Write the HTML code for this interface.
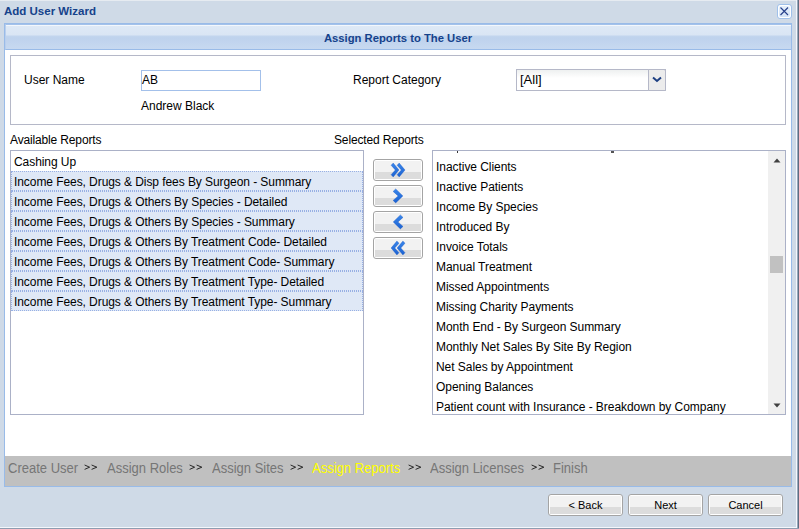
<!DOCTYPE html>
<html><head><meta charset="utf-8">
<style>
*{box-sizing:border-box;margin:0;padding:0}
html,body{width:799px;height:529px;overflow:hidden;background:#cfdae7;font-family:"Liberation Sans",sans-serif}
.abs{position:absolute}
#topline{left:0;top:0;width:799px;height:1px;background:#e6ebf1}
#rline1{left:796px;top:0;width:1px;height:528px;background:#f4f7fb}
#rline2{left:797px;top:0;width:1px;height:529px;background:#98a8bd}
#rline3{left:798px;top:0;width:1px;height:529px;background:#5f6d80}
#bline1{left:0;top:527px;width:797px;height:1px;background:#f4f7fb}
#bline2{left:0;top:528px;width:799px;height:1px;background:#8e9cb0}
#title{left:4px;top:4px;font-size:11.5px;font-weight:bold;color:#15428b;line-height:14px}
#close{left:777px;top:4px;width:15px;height:15px;border:1px solid #9fc0ea;border-radius:3px;background:#fff;padding:1px}
#close div{width:100%;height:100%;border-radius:2px;background:linear-gradient(#e5effb,#d3e3f7)}
#panel{left:4px;top:23px;width:788px;height:464px;border:1px solid #99bbe8;background:#fff}
#hdr{left:0;top:0;width:786px;height:26px;background:linear-gradient(#f3f7fc 0,#f3f7fc 1px,#dee9f6 1px,#d9e5f4 10px,#c2d5ee 11px,#bed2ed 13px,#c7d9f0 100%);border-bottom:1px solid #99bbe8;border-top:1px solid #a3c1ea;border-left:1px solid #b9cfee}
#hdr span{position:absolute;left:-1px;width:786px;text-align:center;top:7px;font-size:11.25px;font-weight:bold;color:#15428b;line-height:13px}
.lbl{font-size:12px;color:#000;line-height:14px}
.t{letter-spacing:-0.15px}
#info{left:10px;top:55px;width:776px;height:70px;border:1px solid #b5b8c8}
.inp{border:1px solid #a3c0ea;background:#fff;font-size:12px}
.list{border:1px solid #abb1c7;background:#fff;overflow:hidden}
.row{position:absolute;left:0;height:20px;width:352px;font-size:12px;letter-spacing:-0.07px;padding-left:3px;line-height:20px;white-space:nowrap;color:#000}
.sel{background:#dfe8f6;border:1px dotted #98b0e4;line-height:18px;padding-left:2px;padding-top:1px}
.rrow{position:absolute;left:3px;height:20px;font-size:12px;letter-spacing:-0.05px;line-height:20px;white-space:nowrap;color:#000}
.btn{border:1px solid #a4a4a4;border-radius:3px;background:#fff;padding:1px}
.btn .in{width:100%;height:100%;background:linear-gradient(#f2f2f2 0,#f2f2f2 61%,#dcdcdc 61%,#dcdcdc 100%)}
.step{font-size:13px;color:#767676;top:460px;line-height:15px;transform:scaleY(1.1);transform-origin:0 0}
.arr{top:464px}
#steps{left:5px;top:456px;width:786px;height:30px;background:#c0c0c0}
.bb{font-size:11px;color:#000;text-align:center;line-height:18px}
.bb .in{background:linear-gradient(#f2f2f2 0,#f2f2f2 61%,#dcdcdc 61%,#dcdcdc 100%)}
</style></head><body>
<div class="abs" id="topline"></div>
<div class="abs" id="title">Add User Wizard</div>
<div class="abs" id="close"><div></div>
<svg class="abs" style="left:2px;top:2px" width="10" height="10" viewBox="0 0 10 10"><path d="M0.5,0.5 L8,8 M8,0.5 L0.5,8" stroke="#27408b" stroke-width="1.15"/></svg></div>
<div class="abs" id="panel">
  <div class="abs" id="hdr"><span>Assign Reports to The User</span></div>
</div>
<div class="abs" id="info"></div>
<div class="abs lbl" style="left:24px;top:73px">User Name</div>
<div class="abs inp" style="left:141px;top:70px;width:120px;height:21px;line-height:19px;padding-left:0">AB</div>
<div class="abs lbl" style="left:141px;top:99px">Andrew Black</div>
<div class="abs lbl" style="left:353px;top:73px">Report Category</div>
<div class="abs" style="left:516px;top:69px;width:150px;height:22px;border:1px solid #b5b8c8;background:linear-gradient(#eef0f0,#fff 8px)"></div>
<div class="abs" style="left:520px;top:72px;font-size:13px;line-height:16px;color:#000">[All]</div>
<div class="abs" style="left:648px;top:69px;width:18px;height:22px;border:1px solid #b5b8c8;border-top-right-radius:2px;background:#ececec"></div>
<svg class="abs" style="left:652px;top:76px" width="10" height="7" viewBox="0 0 10 7"><path d="M1,1.6 L5,5 L9,1.6" fill="none" stroke="#1d3f82" stroke-width="2"/></svg>
<div class="abs lbl t" style="left:10px;top:133px">Available Reports</div>
<div class="abs lbl t" style="left:334px;top:133px">Selected Reports</div>

<div class="abs list" style="left:10px;top:150px;width:354px;height:265px">
  <div class="row" style="top:1px">Cashing Up</div>
  <div class="row sel" style="top:20px">Income Fees, Drugs &amp; Disp fees By Surgeon - Summary</div>
  <div class="row sel" style="top:40px">Income Fees, Drugs &amp; Others By Species - Detailed</div>
  <div class="row sel" style="top:60px">Income Fees, Drugs &amp; Others By Species - Summary</div>
  <div class="row sel" style="top:80px">Income Fees, Drugs &amp; Others By Treatment Code- Detailed</div>
  <div class="row sel" style="top:100px">Income Fees, Drugs &amp; Others By Treatment Code- Summary</div>
  <div class="row sel" style="top:120px">Income Fees, Drugs &amp; Others By Treatment Type- Detailed</div>
  <div class="row sel" style="top:140px">Income Fees, Drugs &amp; Others By Treatment Type- Summary</div>
</div>

<div class="abs btn" style="left:373px;top:159px;width:50px;height:22px"><div class="in"></div></div>
<div class="abs btn" style="left:373px;top:185px;width:50px;height:22px"><div class="in"></div></div>
<div class="abs btn" style="left:373px;top:211px;width:50px;height:22px"><div class="in"></div></div>
<div class="abs btn" style="left:373px;top:237px;width:50px;height:22px"><div class="in"></div></div>
<svg class="abs" style="left:373px;top:159px" width="50" height="100" viewBox="0 0 50 100">
  <defs><linearGradient id="g" x1="0" y1="0" x2="0" y2="1"><stop offset="0" stop-color="#3a86ea"/><stop offset="1" stop-color="#1b62d2"/></linearGradient></defs>
  <g fill="url(#g)" stroke="#1552bd" stroke-width="0.35">
    <path d="M18.1,6.2 L20.2,4.1 L26.0,11.0 L20.2,17.9 L18.1,15.7 L22.3,11.0 Z"/>
    <path d="M24.1,6.2 L26.2,4.1 L32.0,11.0 L26.2,17.9 L24.1,15.7 L28.3,11.0 Z"/>
    <path d="M20.1,32.4 L22.7,29.9 L29.9,36.9 L22.7,43.9 L20.1,41.4 L25.1,36.9 Z"/>
    <path d="M30.0,58.4 L27.4,55.9 L20.2,62.9 L27.4,69.9 L30.0,67.4 L25.0,62.9 Z"/>
    <path d="M26.0,84.2 L23.9,82.1 L18.1,89.0 L23.9,95.9 L26.0,93.7 L21.8,89.0 Z"/>
    <path d="M32.0,84.2 L29.9,82.1 L24.1,89.0 L29.9,95.9 L32.0,93.7 L27.8,89.0 Z"/>
  </g>
</svg>

<div class="abs list" style="left:432px;top:150px;width:354px;height:265px">
  <div class="rrow" style="top:6px">Inactive Clients</div>
  <div class="rrow" style="top:26px">Inactive Patients</div>
  <div class="rrow" style="top:46px">Income By Species</div>
  <div class="rrow" style="top:66px">Introduced By</div>
  <div class="rrow" style="top:86px">Invoice Totals</div>
  <div class="rrow" style="top:106px">Manual Treatment</div>
  <div class="rrow" style="top:126px">Missed Appointments</div>
  <div class="rrow" style="top:146px">Missing Charity Payments</div>
  <div class="rrow" style="top:166px">Month End - By Surgeon Summary</div>
  <div class="rrow" style="top:186px">Monthly Net Sales By Site By Region</div>
  <div class="rrow" style="top:206px">Net Sales by Appointment</div>
  <div class="rrow" style="top:226px">Opening Balances</div>
  <div class="rrow" style="top:246px">Patient count with Insurance - Breakdown by Company</div>
  <div class="abs" style="left:24px;top:0;width:1px;height:2px;background:#333"></div>
  <div class="abs" style="left:178px;top:0;width:3px;height:2px;background:#555"></div>
  <div class="abs" style="left:335px;top:0;width:17px;height:263px;background:#f0f0f0"></div>
  <svg class="abs" style="left:340px;top:7px" width="8" height="5" viewBox="0 0 8 5"><path d="M0.5,4.5 L4,0.5 L7.5,4.5 Z" fill="#404040"/></svg>
  <div class="abs" style="left:337px;top:105px;width:13px;height:17px;background:#c1c1c1"></div>
  <svg class="abs" style="left:340px;top:252px" width="8" height="5" viewBox="0 0 8 5"><path d="M0.5,0.5 L4,4.5 L7.5,0.5 Z" fill="#404040"/></svg>
</div>

<div class="abs" id="steps"></div>
<div class="abs step" style="left:8px">Create User</div>
<svg class="abs arr" style="left:84px" width="14" height="7" viewBox="0 0 14 7"><path d="M0.6,1 L5.6,3.2 L0.6,5.4 M7.6,1 L12.8,3.2 L7.6,5.4" fill="none" stroke="#000" stroke-width="0.8"/></svg>
<div class="abs step" style="left:107px">Assign Roles</div>
<svg class="abs arr" style="left:189px" width="14" height="7" viewBox="0 0 14 7"><path d="M0.6,1 L5.6,3.2 L0.6,5.4 M7.6,1 L12.8,3.2 L7.6,5.4" fill="none" stroke="#000" stroke-width="0.8"/></svg>
<div class="abs step" style="left:212px">Assign Sites</div>
<svg class="abs arr" style="left:290px" width="14" height="7" viewBox="0 0 14 7"><path d="M0.6,1 L5.6,3.2 L0.6,5.4 M7.6,1 L12.8,3.2 L7.6,5.4" fill="none" stroke="#000" stroke-width="0.8"/></svg>
<div class="abs step" style="left:312px;color:#ffff00">Assign Reports</div>
<svg class="abs arr" style="left:408px" width="14" height="7" viewBox="0 0 14 7"><path d="M0.6,1 L5.6,3.2 L0.6,5.4 M7.6,1 L12.8,3.2 L7.6,5.4" fill="none" stroke="#000" stroke-width="0.8"/></svg>
<div class="abs step" style="left:430px">Assign Licenses</div>
<svg class="abs arr" style="left:531px" width="14" height="7" viewBox="0 0 14 7"><path d="M0.6,1 L5.6,3.2 L0.6,5.4 M7.6,1 L12.8,3.2 L7.6,5.4" fill="none" stroke="#000" stroke-width="0.8"/></svg>
<div class="abs step" style="left:553px">Finish</div>

<div class="abs btn bb" style="left:548px;top:494px;width:75px;height:22px"><div class="in">&lt; Back</div></div>
<div class="abs btn bb" style="left:628px;top:494px;width:75px;height:22px"><div class="in">Next</div></div>
<div class="abs btn bb" style="left:708px;top:494px;width:75px;height:22px"><div class="in">Cancel</div></div>

<div class="abs" id="rline1"></div>
<div class="abs" id="rline2"></div>
<div class="abs" id="rline3"></div>
<div class="abs" id="bline1"></div>
<div class="abs" id="bline2"></div>
</body></html>
